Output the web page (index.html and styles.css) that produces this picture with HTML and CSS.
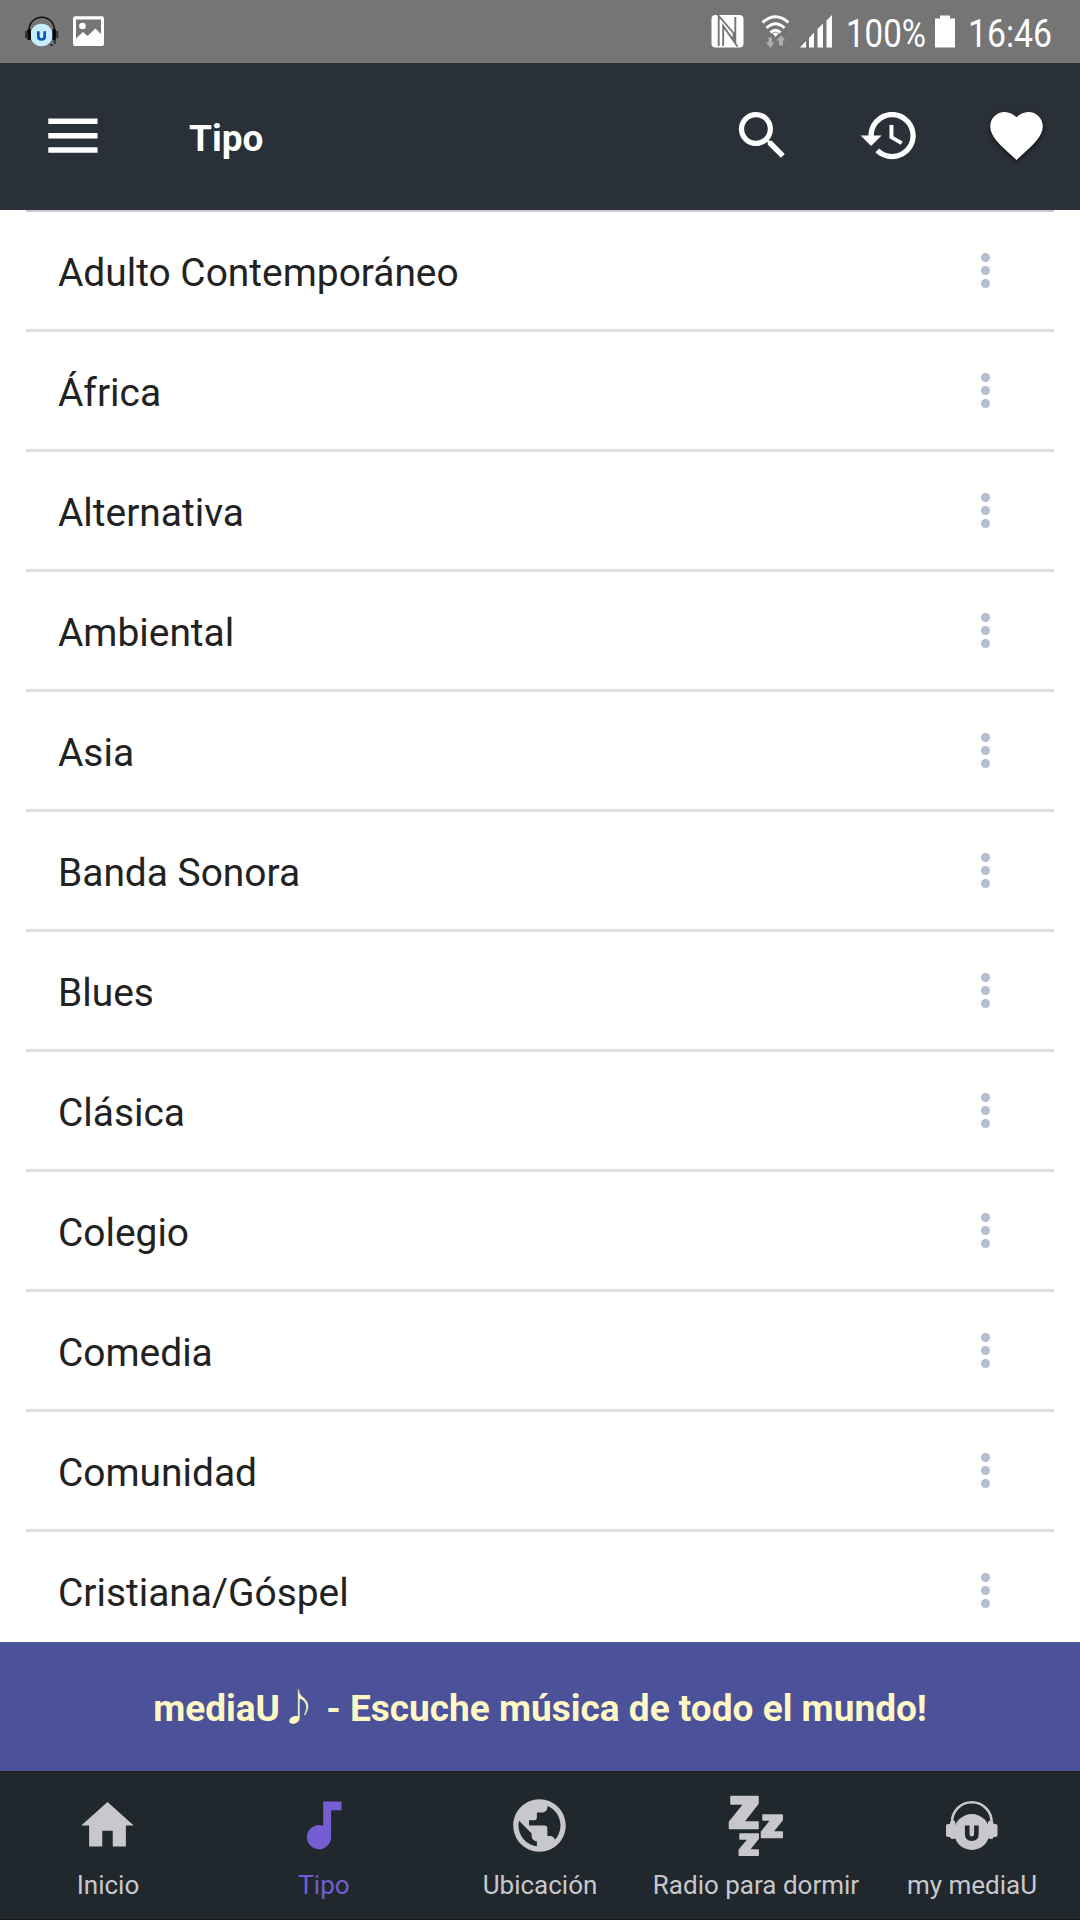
FILE: index.html
```html
<!DOCTYPE html>
<html lang="es">
<head>
<meta charset="utf-8">
<title>Tipo</title>
<link rel="stylesheet" href="styles.css">
</head>
<body>
<div class="status">
  <svg class="s-left" width="120" height="63" viewBox="0 0 120 63">
    <path d="M29 33V30A12.700 12.700 0 0 1 54.500 30V33" fill="none" stroke="#111" stroke-width="1.500"/>
    <circle cx="41.500" cy="35" r="11.200" fill="#c9edff"/>
    <rect x="27.300" y="29" width="3.700" height="11" rx="1" fill="#0a0a0a"/><rect x="25" y="31" width="2" height="7" fill="#333"/>
    <rect x="52.300" y="29" width="3.700" height="11" rx="1" fill="#0a0a0a"/><rect x="56.200" y="31" width="2" height="7" fill="#333"/>
    <path d="M55.500 40L53.500 42M54.500 41l1 3M50 45h3" stroke="#222" stroke-width="1.300"/>
    <path d="M38.300 31.300v5.200q0 3 3.200 3t3.200-3v-5.200" fill="none" stroke="#0757ae" stroke-width="2.700"/>
    <path fill="#fff" fill-rule="evenodd" d="M75 16.300h27a2 2 0 0 1 2 2V44a2 2 0 0 1-2 2H75a2 2 0 0 1-2-2V18.300a2 2 0 0 1 2-2zM76 19.500V38.500l7-6.500 4.500 4 8-7.500 5.500 5.500V19.500z"/>
    <circle cx="82.500" cy="26" r="3.300" fill="#fff"/>
  </svg>
  <svg class="s-right" width="390" height="63" viewBox="690 0 390 63">
    <rect x="711.500" y="15" width="32" height="32.500" rx="4" fill="#fff"/>
    <path d="M718.700 16V46M717.500 14.500L733.500 33V40.500M735.300 17V44M723.200 46V26L737.500 46.500" fill="none" stroke="#757575" stroke-width="1.900"/>
    <path d="M723 27l9.500 10.500v2z" fill="#757575"/>
    <g fill="none" stroke="#fff" stroke-width="3">
      <path d="M762.500 22.500Q775.500 11 788.500 22.500M766.500 28Q775.500 19.500 784.500 28M770.500 32.500Q775.500 28 780.500 32.500"/>
    </g>
    <path d="M772.500 33.500q3-2 6 0l-3 3.500z" fill="#fff"/>
    <path d="M768.500 37.500h3.500v5h2.500l-4.200 5.500-4.300-5.500h2.500zM779 45.500h4v-5h2.500l-4.500-5-4.500 5h2.500z" fill="#adadad"/>
    <path fill="#fff" d="M800 47.500L806 41V47.500zM809 47.500V38L814 32.500V47.500zM817.500 47.500V29L823 23.500V47.500zM826.500 47.500V20.500L832 15V47.500z"/>
    <text class="s-text" x="846" y="47" textLength="80" lengthAdjust="spacingAndGlyphs">100%</text>
    <path fill="#fff" d="M940 15.500h10v3h5v29h-20v-29h5z"/>
    <text class="s-text" x="968" y="47" textLength="84" lengthAdjust="spacingAndGlyphs">16:46</text>
  </svg>
</div>
<header class="appbar">
  <svg class="menu" width="50" height="36" viewBox="0 0 50 36"><path fill="#fff" d="M.300 .500h49.200v5.500H.300zM.300 15h49.200v5.500H.300zM.300 29.200h49.200v5.500H.300z"/></svg>
  <h1>Tipo</h1>
  <div class="actions">
    <svg viewBox="0 0 24 24"><path d="M15.500 14h-.79l-.28-.27C15.410 12.590 16 11.110 16 9.500 16 5.910 13.090 3 9.500 3S3 5.910 3 9.500 5.910 16 9.500 16c1.610 0 3.090-.59 4.230-1.570l.27.28v.79l5 4.990L20.490 19l-4.990-5zm-6 0C7.010 14 5 11.990 5 9.500S7.010 5 9.500 5 14 7.010 14 9.500 11.990 14 9.500 14z"/></svg>
    <svg viewBox="0 0 24 24"><path d="M13 3c-4.970 0-9 4.030-9 9H1l3.890 3.890.07.14L9 12H6c0-3.870 3.130-7 7-7s7 3.130 7 7-3.130 7-7 7c-1.930 0-3.680-.79-4.940-2.060l-1.420 1.420C8.270 19.990 10.510 21 13 21c4.970 0 9-4.030 9-9s-4.030-9-9-9zm-1 5v5l4.280 2.540.72-1.210-3.500-2.080V8H12z"/></svg>
    <svg class="heart" viewBox="0 0 24 24"><path d="M12 21.350l-1.450-1.320C5.400 15.360 2 12.280 2 8.500 2 5.420 4.420 3 7.500 3c1.740 0 3.410.81 4.500 2.090C13.090 3.810 14.760 3 16.500 3 19.580 3 22 5.420 22 8.500c0 3.780-3.400 6.860-8.550 11.540L12 21.350z"/></svg>
  </div>
</header>
<ul class="list">
  <li><span>Adulto Contemporáneo</span><i class="dots"><b></b><b></b><b></b></i></li>
  <li><span>África</span><i class="dots"><b></b><b></b><b></b></i></li>
  <li><span>Alternativa</span><i class="dots"><b></b><b></b><b></b></i></li>
  <li><span>Ambiental</span><i class="dots"><b></b><b></b><b></b></i></li>
  <li><span>Asia</span><i class="dots"><b></b><b></b><b></b></i></li>
  <li><span>Banda Sonora</span><i class="dots"><b></b><b></b><b></b></i></li>
  <li><span>Blues</span><i class="dots"><b></b><b></b><b></b></i></li>
  <li><span>Clásica</span><i class="dots"><b></b><b></b><b></b></i></li>
  <li><span>Colegio</span><i class="dots"><b></b><b></b><b></b></i></li>
  <li><span>Comedia</span><i class="dots"><b></b><b></b><b></b></i></li>
  <li><span>Comunidad</span><i class="dots"><b></b><b></b><b></b></i></li>
  <li><span>Cristiana/Góspel</span><i class="dots"><b></b><b></b><b></b></i></li>
</ul>
<div class="banner"><span>mediaU<em>♪</em> - Escuche música de todo el mundo!</span></div>
<nav class="tabs">
  <a><svg viewBox="0 0 24 24"><path d="M10 20v-6h4v6h5v-8h3L12 3 2 12h3v8z"/></svg><span>Inicio</span></a>
  <a class="on"><svg viewBox="0 0 63 63"><path d="M31.200 7.500H49.500V16.300H39.100V43A12.100 12.100 0 1 1 31.200 31.800z"/></svg><span>Tipo</span></a>
  <a><svg viewBox="0 0 24 24"><path d="M12 2C6.480 2 2 6.480 2 12s4.480 10 10 10 10-4.480 10-10S17.520 2 12 2zm-1 17.930c-3.950-.49-7-3.850-7-7.930 0-.62.08-1.210.21-1.790L9 15v1c0 1.100.9 2 2 2v1.930zm6.900-2.540c-.26-.81-1-1.390-1.900-1.390h-1v-3c0-.55-.45-1-1-1H8v-2h2c.55 0 1-.45 1-1V7h2c1.100 0 2-.9 2-2v-.41c2.930 1.190 5 4.060 5 7.410 0 2.080-.8 3.970-2.100 5.390z"/></svg><span>Ubicación</span></a>
  <a><svg viewBox="0 0 63 63"><path class="zzz" d="M7 2.500H34V9.500L19.500 28H34V34.500H5.500V28L20 10H7zM39 21H58.200V26L48.500 38H58.200V43.500H37.500V38L47 26H39zM16 40H34.200V44.500L25 56H34.200V61.200H15.300V56L24.500 45H16z"/></svg><span>Radio para dormir</span></a>
  <a><svg viewBox="0 0 63 63"><path class="band" d="M12 30V28A19.800 19.800 0 0 1 51.600 28V30"/><circle cx="31.800" cy="38" r="17.900"/><rect x="6" y="30" width="6" height="13" rx="2"/><rect x="10" y="26.500" width="5.500" height="18.500" rx="2.500"/><rect x="48" y="26.500" width="5.500" height="18.500" rx="2.500"/><rect x="51.500" y="30" width="6" height="13" rx="2"/><path class="u" d="M27.200 31.500V39.500Q27.200 44.800 31.800 44.800T36.400 39.500V31.500"/></svg><span>my mediaU</span></a>
</nav>
</body>
</html>
```
FILE: styles.css
```css
* { box-sizing: border-box; }
body {
  margin: 0;
  width: 1080px;
  height: 1920px;
  display: flex;
  flex-direction: column;
  overflow: hidden;
  background: #fff;
  font-family: Roboto, "DejaVu Sans", sans-serif;
}
svg { display: block; flex: none; }
.status {
  height: 63px;
  flex: none;
  display: flex;
  justify-content: space-between;
  background: #757575;
}
.s-text { font-size: 39px; fill: #fff; }
.appbar {
  height: 147px;
  flex: none;
  display: flex;
  align-items: center;
  padding: 0 32px 0 48px;
  background: #2a3037;
}
.menu { margin-bottom: 1px; }
h1 {
  margin: 4px 0 0 91px;
  flex: 1;
  color: #fff;
  font-size: 37px;
  font-weight: 700;
  line-height: 44px;
}
.actions { display: flex; gap: 64px; margin-bottom: 2px; }
.actions svg { width: 63px; height: 63px; fill: #fff; }
.heart { filter: drop-shadow(0 2px 2px rgba(0, 0, 0, .6)); }
.list {
  flex: 1;
  min-height: 0;
  overflow: hidden;
  margin: 0 26px;
  padding: 0;
  list-style: none;
  border-top: 2px solid #c8c7cc;
}
.list li {
  height: 120px;
  display: flex;
  align-items: center;
  justify-content: space-between;
  padding: 0 64px 0 32px;
  border-bottom: 3px solid #dedede;
}
.list span {
  margin-top: 4px;
  color: #222;
  font-size: 38.900px;
  line-height: 48px;
}
.dots { display: flex; flex-direction: column; gap: 4.200px; }
.dots b { width: 9px; height: 9px; border-radius: 50%; background: #b2bfcc; }
.banner {
  height: 129px;
  flex: none;
  display: flex;
  align-items: center;
  justify-content: center;
  background: #4b529a;
  color: #fff8c4;
  font-size: 37px;
  font-weight: 700;
  line-height: 44px;
  white-space: pre;
}
.banner span { margin-top: 4px; }
.banner em {
  font-family: "Noto Sans CJK JP", sans-serif;
  font-style: normal;
  line-height: 0;
}
.tabs {
  height: 149px;
  flex: none;
  display: grid;
  grid-template-columns: repeat(5, 216px);
  border-top: 2px solid #222127;
  border-bottom: 1px solid #17171b;
  background: #20272d;
}
.tabs a {
  display: flex;
  flex-direction: column;
  align-items: center;
  padding-top: 21px;
  color: #c8c7cc;
  fill: #c8c7cc;
  font-size: 26px;
  line-height: 32px;
  white-space: nowrap;
}
.tabs svg { width: 63px; height: 63px; margin-right: 1px; }
.tabs span { margin-top: 12px; }
.tabs .on { color: #745ed2; fill: #745ed2; }
.zzz { stroke: #c8c7cc; stroke-width: 1.500px; stroke-linejoin: round; }
.band { fill: none; stroke: #c8c7cc; stroke-width: 2.500px; }
.u { fill: none; stroke: #20272d; stroke-width: 4.600px; }
```
